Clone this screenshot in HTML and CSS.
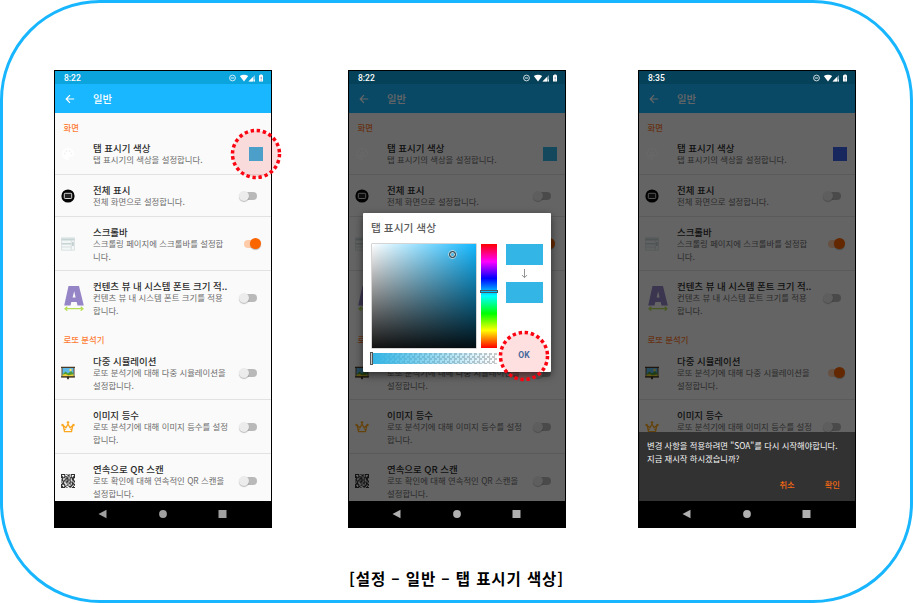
FILE: index.html
```html
<!DOCTYPE html>
<html lang="ko">
<head>
<meta charset="utf-8">
<title>설정 – 일반 – 탭 표시기 색상</title>
<link rel="stylesheet" href="styles.css">
</head>
<body>
<svg class="defs" width="0" height="0">
  <symbol id="palette" viewBox="0 0 14 14"><path fill="#fff" d="M7 1a6 6 0 0 0 0 12c1.300 0 1.500-1 1-1.700-.5-.9 0-1.600.9-1.600H10.500A2.700 2.700 0 0 0 13 7C13 3.600 10.300 1 7 1z"/><g fill="#f3f3f3"><circle cx="3.700" cy="6.600" r="1"/><circle cx="5.500" cy="4" r="1"/><circle cx="8.600" cy="4" r="1"/><circle cx="10.500" cy="6.500" r="1"/></g></symbol>
  <symbol id="screen" viewBox="0 0 14 14"><circle cx="7" cy="7" r="6.600" fill="#050505"/><rect x="3.300" y="4.300" width="7.400" height="5.200" rx=".8" fill="#222" stroke="#e8e8e8" stroke-width=".9"/></symbol>
  <symbol id="scroll" viewBox="0 0 14 14"><rect x=".6" y=".8" width="12.800" height="12.400" fill="#f3f6f6" stroke="#d5dfdf" stroke-width=".8"/><path d="M.6 1.500h12.800v2H.6zM.6 6h9.600v1.600H.6z" fill="#c5d3d3"/><path d="M10.300 1v12M.6 10h9.700" stroke="#d0dbdb" stroke-width=".8"/><path d="M11.200 5h1.400v4h-1.400z" fill="#b8c5c5"/></symbol>
  <symbol id="letter" viewBox="0 0 20 25"><path fill="#9585c6" fill-rule="evenodd" d="M4.500 0h10.500l4.800 19.500h-6.300l-.8-3.500H7.300l-.8 3.500H.2zM8.600 11.500h3l-1.400-6.300z"/><path d="M1 22.700h18M3.300 20.700l-2.300 2 2.300 2M16.700 20.700l2.300 2-2.300 2" fill="none" stroke="#b4dd55" stroke-width="1.200"/></symbol>
  <symbol id="picture" viewBox="0 0 14 14"><path d="M7 10v3.500" stroke="#6d5328" stroke-width="1"/><rect x="1" y="1.500" width="12" height="9.300" fill="#5fb9ea" stroke="#5b4527"/><path d="M1.500 8.500l3-3 2.500 2 3-2.500 2.500 2.500v2.800h-11z" fill="#4f9a35"/><path d="M1.500 8.800l3-.8 3 1.300 5-1v2h-11z" fill="#f0cf38"/><circle cx="9.500" cy="4" r="1.200" fill="#ffe25a"/><path d="M0 1.400h14M0 10.900h14" stroke="#493b26" stroke-width="1.200"/><circle cx="7" cy="11.800" r="1.200" fill="#383126"/></symbol>
  <symbol id="crown" viewBox="0 0 14 14"><path d="M2.200 5.400L3.500 11.600h7l1.300-6.200-2.800 2.300L7 4 5 7.700zM3 9.400l1.700 0M9.300 9.400h1.700" fill="none" stroke="#faa61e" stroke-width="1.300" stroke-linejoin="round"/><g fill="#faa61e"><circle cx="1.500" cy="5" r="1.200"/><circle cx="7" cy="2.500" r="1.300"/><circle cx="12.500" cy="5" r="1.200"/></g></symbol>
  <symbol id="qr" viewBox="0 0 13 13"><path fill="none" stroke="#303030" d="M0 .5h4M5 .5h1M7 .5h1M9 .5h4M0 1.500h1M3 1.500h1M6 1.500h2M9 1.500h1M12 1.500h1M0 2.500h2M3 2.500h3M7 2.500h1M9 2.500h1M11 2.500h2M0 3.500h4M5 3.500h2M8 3.500h5M1 4.500h1M4 4.500h3M8 4.500h1M10 4.500h2M0 5.500h2M3 5.500h2M6 5.500h3M10 5.500h2M1 6.500h3M5 6.500h2M8 6.500h1M11 6.500h2M0 7.500h1M2 7.500h1M4 7.500h3M8 7.500h3M12 7.500h1M1 8.500h2M5 8.500h1M7 8.500h2M10 8.500h2M0 9.500h4M6 9.500h1M8 9.500h1M10 9.500h3M0 10.500h1M3 10.500h1M5 10.500h2M9 10.500h2M12 10.500h1M0 11.500h2M3 11.500h2M7 11.500h3M11 11.500h1M0 12.500h4M5 12.500h1M8 12.500h1M10 12.500h3"/></symbol>
  <symbol id="back" viewBox="0 0 10 10"><path d="M9.200 5H1.500M5 1.200L1.200 5 5 8.800" fill="none" stroke="#fff" stroke-width="1.200"/></symbol>
  <symbol id="status" viewBox="0 0 34 8"><g fill="none" stroke="#fff"><circle cx="3.500" cy="4" r="2.900" stroke-width=".8"/><path d="M2 4h3" stroke-width=".9"/></g><path fill="#fff" d="M10.800 2q4.200-2.600 8.400 0L15 7.400z"/><path fill="#fff" opacity=".5" d="M26 1v6.500h-6.500z"/><path fill="#fff" d="M24 3v4.500h-4.500z"/><path fill="#fff" d="M24.800 5.500h1v2h-1zM30 1.300h1.200V.5h2v.8h1.200v6.200H30z"/><path d="M32.200 2.800v2.400M32.200 5.800v.8" stroke="#347" stroke-width=".6"/></symbol>
  <symbol id="navicons" viewBox="0 0 216 26"><path d="M43.500 13l8-4.200v8.400z"/><circle cx="108" cy="13" r="3.900"/><path d="M163.500 9h8v8h-8z"/></symbol>
</svg>

<main class="frame">
  <div class="phones">
    <section class="phone" data-time="8:22" data-swatch="tap"></section>
    <section class="phone dim" data-time="8:22" data-swatch="cyan">
      <div class="dialog">
        <h2>탭 표시기 색상</h2>
        <div class="picker">
          <div class="left">
            <div class="planes">
              <div class="plane"><i class="ring"></i></div>
              <div class="hue"><i class="hue-mark"></i></div>
            </div>
            <div class="alpha"><i class="alpha-mark"></i></div>
          </div>
          <div class="compare">
            <span class="sample"></span>
            <svg width="7" height="10" viewBox="0 0 7 10"><path d="M3.500 0v8.500M1 6l2.500 2.700L6 6" fill="none" stroke="#888" stroke-width=".9"/></svg>
            <span class="sample"></span>
          </div>
        </div>
        <button class="ok">OK</button>
        <svg class="mark mark-ok" viewBox="0 0 52 52"><circle cx="26" cy="26" r="23.500"/></svg>
      </div>
    </section>
    <section class="phone dim" data-time="8:35" data-swatch="blue" data-multi="on">
      <div class="snack">
        <p>변경 사항을 적용하려면 "SOA"를 다시 시작해야합니다.<br>지금 재시작 하시겠습니까?</p>
        <div class="actions"><span>취소</span><span>확인</span></div>
      </div>
    </section>
  </div>
  <p class="caption">[설정 – 일반 – 탭 표시기 색상]</p>
</main>
<script src="app.js"></script>
</body>
</html>
```
FILE: styles.css
```css
* { box-sizing: border-box; }
body { margin: 0; background: #fff; font-family: "Noto Sans CJK KR", "Noto Sans", sans-serif; }
h2, h3, p { margin: 0; font-weight: 400; }
svg { display: block; flex: none; }
.defs { position: absolute; }

.frame { width: 913px; height: 603px; border: 3px solid #18b6ff; border-radius: 100px; padding: 67px 0 0 51px; overflow: hidden; }
.phones { display: flex; }
.phone { position: relative; width: 218px; height: 458px; border: 1px solid #000; background: #fafafa; display: flex; flex-direction: column; }
.phone:nth-child(2) { margin-left: 76px; }
.phone:nth-child(3) { margin-left: 72px; }

.statusbar { height: 13px; background: #0ca4dc; display: flex; align-items: center; justify-content: space-between; padding: 1px 8px 0 9px; font: 500 8.5px/12px Roboto, sans-serif; color: #fff; }
.appbar { height: 29px; background: #18b7ff; display: flex; align-items: center; padding-left: 10px; gap: 18px; font-size: 10.3px; font-weight: 500; color: #fff; }
.appbar span { margin-top: -1px; }
.list { height: 388px; overflow: hidden; }
.list h3 { height: 20px; padding: 8px 0 0 8.500px; font-size: 8.4px; line-height: 12px; font-weight: 500; color: #ff7a33; }
.list h3.second { height: 21px; }
.row { display: grid; grid-template-columns: 38px 1fr 32px; height: 54px; border-bottom: 1px solid #e2e2e2; }
.row.short { height: 42px; }
.row.last { border-bottom: 0; }
.row .icon { align-self: center; margin-left: 5.500px; }
.row .icon.big { margin-left: 9px; }
.copy { padding-top: 9px; white-space: nowrap; }
.copy strong { display: block; font-size: 9.45px; line-height: 12px; font-weight: 500; color: #2c2c2c; }
.copy p { margin-top: -1px; font-size: 8.4px; line-height: 12.5px; color: #6c6c6c; }

.toggle { position: relative; align-self: center; width: 13px; height: 8px; margin-left: 5px; border-radius: 4px; background: #b9b9b9; }
.toggle::after { content: ""; position: absolute; left: -5px; top: -1px; width: 10px; height: 10px; border-radius: 50%; background: #ececec; box-shadow: 0 1px 1px rgba(0,0,0,.25); }
.toggle.on { background: #ffcba8; }
.toggle.on::after { left: 6px; top: -2px; width: 11px; height: 11px; background: #fb6500; }
.swatch { align-self: center; width: 14px; height: 14px; margin-left: 10px; }
.swatch.tap, .swatch.cyan { background: #33b5e5; }
.swatch.blue { background: #3c62e8; }

.navbar { height: 26px; background: #000; fill: #a0a0a0; }
.dim .navbar { fill: #b0b0b0; }
.dim .statusbar { background: #05425a; }
.shade { position: absolute; inset: 13px 0 26px; background: rgba(0,0,0,.6); }

.mark { position: absolute; width: 52px; height: 52px; fill: rgba(255,0,0,.12); stroke: #fb0512; stroke-width: 3.500px; stroke-dasharray: 3.4 2.752; }
.mark-tap { left: 175px; top: 57px; }
.mark-ok { left: 134.500px; top: 116.500px; }

.dialog { position: absolute; left: 14px; top: 142px; z-index: 2; width: 188px; height: 159px; padding: 7px 8px 0 9px; background: #fff; border-radius: 1px; box-shadow: 0 3px 9px rgba(0,0,0,.55); }
.dialog h2 { height: 24px; margin-left: -1px; font-size: 10.7px; line-height: 16px; font-weight: 500; color: #5c5c5c; }
.picker { display: flex; justify-content: space-between; }
.planes { display: flex; gap: 5px; margin-left: -.5px; }
.plane { position: relative; width: 104px; height: 104px; background: linear-gradient(to bottom, transparent, rgba(0,0,0,.93)), linear-gradient(to right, #fff, #14b8ff); box-shadow: 0 0 0 .5px #aaa; }
.ring { position: absolute; left: 77px; top: 7px; width: 7px; height: 7px; border: 1.500px solid #333; border-radius: 50%; box-shadow: 0 0 0 .7px #ddd, inset 0 0 0 1px #ccc; }
.hue { position: relative; width: 16px; height: 104px; background: linear-gradient(#f00, #f0f 17%, #00f 33%, #0ff 50%, #0f0 67%, #ff0 83%, #f00); }
.hue-mark { position: absolute; left: -1px; top: 46px; width: 18px; height: 3px; border: 1px solid #435765; }
.alpha { position: relative; width: 125px; height: 11px; margin-top: 5px; background: linear-gradient(to right, #33b5e5, rgba(51,181,229,0)), repeating-conic-gradient(#c8c8c8 0 25%, #fff 0 50%) 0 0 / 5px 5px; }
.alpha-mark { position: absolute; left: -2px; top: -1px; width: 3px; height: 13px; border: 1px solid #555; background: #ccc; }
.compare { display: flex; flex-direction: column; align-items: center; gap: 3.500px; }
.sample { width: 37px; height: 21px; background: #33b5e5; }
.ok { position: absolute; left: 150px; top: 134px; width: 22px; height: 16px; padding: 0; border: 0; background: none; font: 700 8.500px/16px Roboto, sans-serif; color: #2a78b4; }

.snack { position: absolute; left: 0; right: 0; bottom: 26px; height: 69px; padding: 7px 15px 0 8px; background: #323232; color: #f4f4f4; font-size: 8.3px; line-height: 12.500px; white-space: nowrap; }
.snack .actions { display: flex; justify-content: flex-end; gap: 30px; margin-top: 14px; font-weight: 500; color: #f06814; }

.caption { margin: 38px 51px 0 0; text-align: center; font-size: 15.500px; line-height: 24px; font-weight: 700; color: #000; letter-spacing: .9px; }
```
FILE: app.js
```js
const sections = [
  ["화면", [
    ["palette", "탭 표시기 색상", ["탭 표시기의 색상을 설정합니다."], "swatch"],
    ["screen", "전체 표시", ["전체 화면으로 설정합니다."], "off"],
    ["scroll", "스크롤바", ["스크롤링 페이지에 스크롤바를 설정합", "니다."], "on"],
    ["letter", "컨텐츠 뷰 내 시스템 폰트 크기 적..", ["컨텐츠 뷰 내 시스템 폰트 크기를 적용", "합니다."], "off last"]
  ]],
  ["로또 분석기", [
    ["picture", "다중 시뮬레이션", ["로또 분석기에 대해 다중 시뮬레이션을", "설정합니다."], "multi"],
    ["crown", "이미지 등수", ["로또 분석기에 대해 이미지 등수를 설정", "합니다."], "off"],
    ["qr", "연속으로 QR 스캔", ["로또 확인에 대해 연속적인 QR 스캔을", "설정합니다."], "off last"]
  ]]
];

function row([icon, title, lines, kind], phone) {
  const big = icon === "letter";
  const state = kind === "multi" ? phone.dataset.multi || "off" : kind.split(" ")[0];
  const control = kind === "swatch"
    ? `<span class="swatch ${phone.dataset.swatch}"></span>`
    : `<span class="toggle ${state}"></span>`;
  const classes = `row${lines.length === 1 ? " short" : ""}${kind.includes("last") ? " last" : ""}`;
  return `<div class="${classes}">
    <svg class="icon${big ? " big" : ""}" width="${big ? 20 : 14}" height="${big ? 25 : 14}"><use href="#${icon}"/></svg>
    <div class="copy"><strong>${title}</strong><p>${lines.join("<br>")}</p></div>${control}</div>`;
}

document.querySelectorAll(".phone").forEach(phone => {
  const list = sections.map(([name, rows], i) =>
    `<h3${i ? ' class="second"' : ""}>${name}</h3>` + rows.map(r => row(r, phone)).join("")).join("");
  const overlay = phone.classList.contains("dim")
    ? '<div class="shade"></div>'
    : '<svg class="mark mark-tap" viewBox="0 0 52 52"><circle cx="26" cy="26" r="23.500"/></svg>';
  phone.insertAdjacentHTML("afterbegin", `
    <div class="statusbar"><span>${phone.dataset.time}</span><svg width="34" height="8"><use href="#status"/></svg></div>
    <div class="appbar"><svg width="10" height="10"><use href="#back"/></svg><span>일반</span></div>
    <div class="list">${list}</div>
    <div class="navbar"><svg width="216" height="26"><use href="#navicons"/></svg></div>
    ${overlay}`);
});
```
